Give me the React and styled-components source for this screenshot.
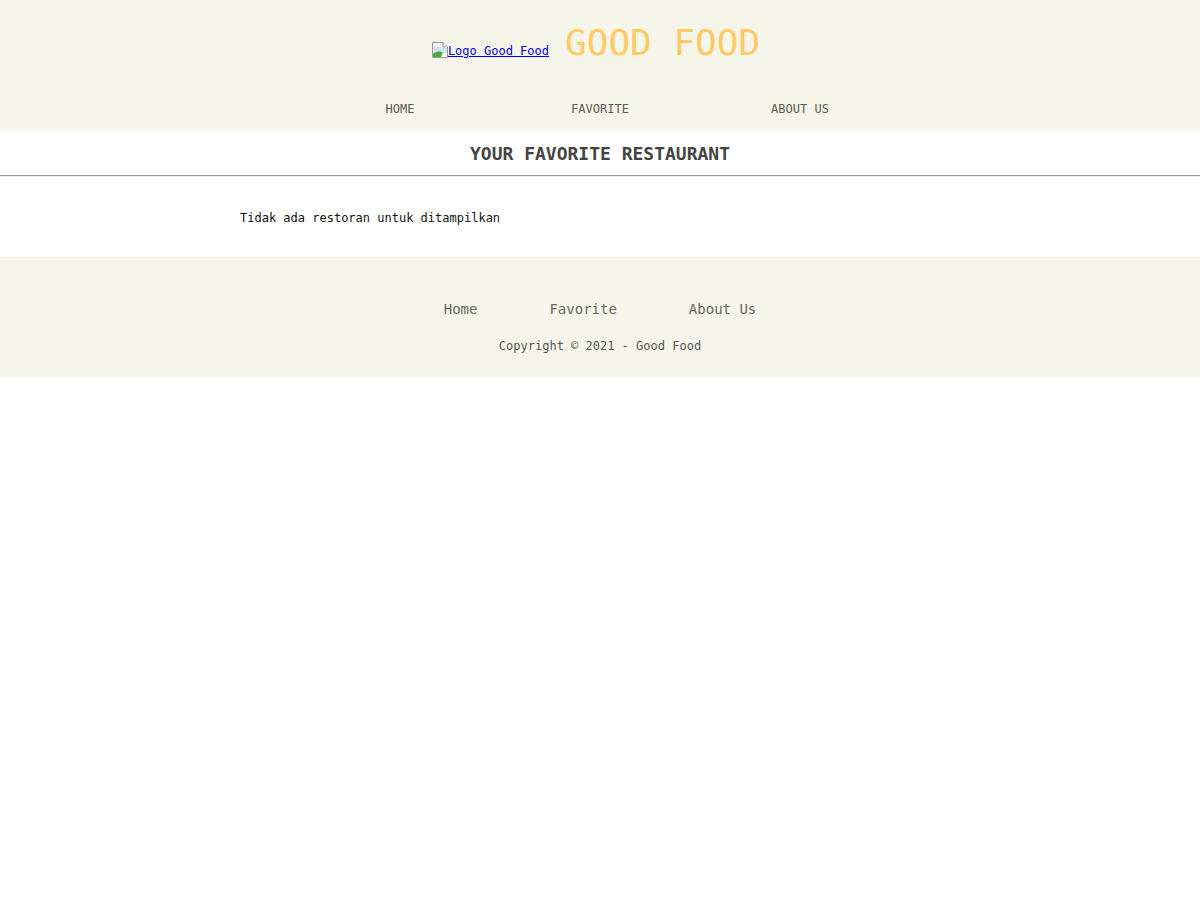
import styled, { createGlobalStyle } from "styled-components";

const GlobalStyle = createGlobalStyle`
  body {
    margin: 0;
    font-family: "DejaVu Sans Mono", "Liberation Mono", monospace;
    background: #ffffff;
  }
`;

const BrokenImage = () => (
  <svg width="16" height="16" viewBox="0 0 16 16">
    <path d="M0.5 0.5 H11 L15.5 5 V15.5 H0.5 Z" fill="#f0f4f7" stroke="#9a9a9a" />
    <path d="M11 0.5 V5 H15.5" fill="#e2e2e2" stroke="#9a9a9a" />
    <rect x="1" y="5" width="14" height="6" fill="#cfe3f2" />
    <path d="M1 15 V12 C4 9 8 9 11 11 L9 15 Z" fill="#4caf3a" />
    <path d="M11 11 L15 11 V15 H9 Z" fill="#ffffff" />
  </svg>
);

const App = () => {
  return (
    <>
      <GlobalStyle />
      <Header>
        <Brand>
          <LogoLink href="#">
            <BrokenImage />
            Logo Good Food
          </LogoLink>
          <Title>GOOD FOOD</Title>
        </Brand>
        <Nav>
          <NavItem>HOME</NavItem>
          <NavItem>FAVORITE</NavItem>
          <NavItem>ABOUT US</NavItem>
        </Nav>
      </Header>
      <Main>
        <SectionTitle>YOUR FAVORITE RESTAURANT</SectionTitle>
        <Divider />
        <Content>
          <Empty>Tidak ada restoran untuk ditampilkan</Empty>
        </Content>
      </Main>
      <Footer>
        <FooterNav>
          <FooterLink>Home</FooterLink>
          <FooterLink>Favorite</FooterLink>
          <FooterLink>About Us</FooterLink>
        </FooterNav>
        <Copyright>Copyright © 2021 - Good Food</Copyright>
      </Footer>
    </>
  );
};

export default App;

const Header = styled.header`
  background: #f6f5e9;
  padding-top: 20px;
`;

const Brand = styled.div`
  display: flex;
  justify-content: center;
  align-items: baseline;
  gap: 16px;
  height: 46px;
  padding-right: 8px;
`;

const LogoLink = styled.a`
  font-size: 12px;
  color: #0000ee;
  text-decoration: underline;

  svg {
    vertical-align: -3px;
  }
`;

const Title = styled.h1`
  margin: 0;
  font-size: 36px;
  font-weight: 400;
  line-height: 46px;
  color: #ffc966;
`;

const Nav = styled.ul`
  list-style: none;
  margin: 0;
  padding: 35px 0 14px;
  display: flex;
  justify-content: center;
`;

const NavItem = styled.li`
  width: 200px;
  text-align: center;
  font-size: 12px;
  line-height: 16px;
  color: #5e5a55;
`;

const Main = styled.main`
  padding-top: 11px;
`;

const SectionTitle = styled.h2`
  margin: 0 0 9px;
  text-align: center;
  font-size: 18px;
  line-height: 24px;
  font-weight: 700;
  color: #444444;
`;

const Divider = styled.hr`
  margin: 0;
  border: 0;
  border-top: 1px solid #9a9a9a;
  border-bottom: 1px solid #eeeeee;
`;

const Content = styled.div`
  width: 720px;
  margin: 0 auto;
  padding: 33px 0 31px;
`;

const Empty = styled.p`
  margin: 0;
  font-size: 12px;
  line-height: 16px;
  color: #111111;
`;

const Footer = styled.footer`
  background: #f6f5e9;
  padding: 42px 0 23px;
  display: flex;
  flex-direction: column;
  align-items: center;
  gap: 19px;
`;

const FooterNav = styled.div`
  display: flex;
  gap: 72px;
`;

const FooterLink = styled.span`
  font-size: 14px;
  line-height: 20px;
  color: #666666;
`;

const Copyright = styled.p`
  margin: 0;
  font-size: 12px;
  line-height: 16px;
  color: #555555;
`;
